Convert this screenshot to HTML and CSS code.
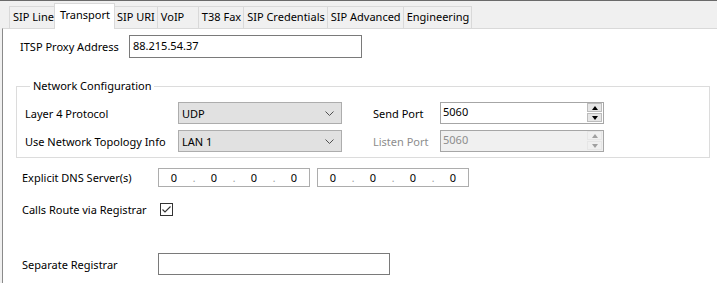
FILE: index.html
```html
<!DOCTYPE html>
<html>
<head>
    <meta charset="utf-8">
    <title>Line - Transport</title>
    <link rel="stylesheet" href="styles.css">
</head>
<body>
    <div class="window">
        <!-- tab strip -->
        <div class="tabs">
            <div class="tab">SIP Line</div>
            <div class="tab active">Transport</div>
            <div class="tab">SIP URI</div>
            <div class="tab">VoIP</div>
            <div class="tab">T38 Fax</div>
            <div class="tab">SIP Credentials</div>
            <div class="tab">SIP Advanced</div>
            <div class="tab">Engineering</div>
        </div>

        <div class="panel">
            <div class="row row-itsp">
                <span class="label label-itsp">ITSP Proxy Address</span>
                <div class="textbox textbox-itsp">88.215.54.37</div>
            </div>

            <fieldset class="group">
                <legend>Network Configuration</legend>
                <div class="group-row">
                    <span class="label label-group">Layer 4 Protocol</span>
                    <div class="combo">
                        <span>UDP</span>
                        <svg class="chevron" width="9" height="5" viewBox="0 0 9 5"><polyline points="0.5,0.5 4.5,4.5 8.5,0.5" fill="none" stroke="#505050" stroke-width="1"/></svg>
                    </div>
                    <span class="label label-port">Send Port</span>
                    <div class="spin">
                        <span class="spin-value">5060</span>
                        <div class="spin-buttons">
                            <div class="spin-btn"><span class="arrow-up"></span></div>
                            <div class="spin-btn"><span class="arrow-down"></span></div>
                        </div>
                    </div>
                </div>
                <div class="group-row">
                    <span class="label label-group">Use Network Topology Info</span>
                    <div class="combo">
                        <span>LAN 1</span>
                        <svg class="chevron" width="9" height="5" viewBox="0 0 9 5"><polyline points="0.5,0.5 4.5,4.5 8.5,0.5" fill="none" stroke="#505050" stroke-width="1"/></svg>
                    </div>
                    <span class="label label-port disabled">Listen Port</span>
                    <div class="spin spin-disabled">
                        <span class="spin-value">5060</span>
                        <div class="spin-buttons">
                            <div class="spin-btn"><span class="arrow-up"></span></div>
                            <div class="spin-btn"><span class="arrow-down"></span></div>
                        </div>
                    </div>
                </div>
            </fieldset>

            <div class="row row-dns">
                <span class="label label-wide">Explicit DNS Server(s)</span>
                <div class="ipbox">
                    <span class="octet">0</span><span class="dot">.</span>
                    <span class="octet">0</span><span class="dot">.</span>
                    <span class="octet">0</span><span class="dot">.</span>
                    <span class="octet">0</span>
                </div>
                <div class="ipbox">
                    <span class="octet">0</span><span class="dot">.</span>
                    <span class="octet">0</span><span class="dot">.</span>
                    <span class="octet">0</span><span class="dot">.</span>
                    <span class="octet">0</span>
                </div>
            </div>

            <div class="row row-check">
                <span class="label label-check">Calls Route via Registrar</span>
                <div class="checkbox">
                    <svg width="11" height="11" viewBox="0 0 11 11"><polyline points="1.5,5.5 4,8 9.5,2.5" fill="none" stroke="#333" stroke-width="1.1"/></svg>
                </div>
            </div>

            <div class="row row-registrar">
                <span class="label label-wide">Separate Registrar</span>
                <div class="textbox textbox-registrar"></div>
            </div>
        </div>
    </div>
</body>
</html>
```

FILE: styles.css
```css
* {
    box-sizing: border-box;
}

html, body {
    margin: 0;
    padding: 0;
}

body {
    width: 717px;
    height: 283px;
    overflow: hidden;
    background: #f0f0f0;
    font-family: 'Noto Sans', 'Open Sans', sans-serif;
    font-size: 11px;
    color: #000;
}

.window {
    height: 283px;
    border-top: 1px solid #6a6a6a;
    display: flex;
    flex-direction: column;
}

/* tab strip */
.tabs {
    display: flex;
    align-items: flex-end;
    height: 27px;
    padding-left: 9px;
}

.tab {
    height: 22px;
    line-height: 20px;
    padding: 0 2px 0 3px;
    min-width: 42px;
    background: #f0f0f0;
    border: 1px solid #d9d9d9;
    border-bottom: none;
    margin-right: -1px;
    white-space: nowrap;
}

.tab.active {
    position: relative;
    z-index: 1;
    height: 26px;
    line-height: 22px;
    padding: 0 4px 0 5px;
    margin: 0 -2px -1px -2px;
    background: #fff;
}

.panel {
    flex: 1;
    margin-left: 2px;
    background: #fff;
    border-top: 1px solid #d9d9d9;
    border-left: 1px solid #8a8a8a;
}

/* rows */
.row {
    display: flex;
    align-items: center;
}

.label {
    white-space: nowrap;
}

.row-itsp {
    margin-top: 6px;
    padding-left: 17px;
}

.label-itsp {
    width: 109px;
}

.textbox {
    height: 23px;
    border: 1px solid #7a7a7a;
    background: #fff;
    padding: 0 3px;
    line-height: 20px;
}

.textbox-itsp {
    width: 233px;
}

/* group box */
.group {
    margin: 20px 7px 0 13px;
    padding: 8px 0 5px 8px;
    border: 1px solid #dcdcdc;
}

.group legend {
    margin-left: 5px;
    padding: 0 3px;
    line-height: 16px;
}

.group-row {
    display: flex;
    align-items: center;
    height: 22px;
}

.group-row + .group-row {
    margin-top: 6px;
}

.label-group {
    width: 153px;
}

.combo {
    width: 164px;
    height: 22px;
    border: 1px solid #adadad;
    background: #e1e1e1;
    display: flex;
    align-items: center;
    justify-content: space-between;
    padding: 0 7px 0 3px;
}

.label-port {
    margin-left: 31px;
    width: 67px;
}

.label.disabled {
    color: #8d8d8d;
}

.spin {
    width: 164px;
    height: 22px;
    border: 1px solid #a6a6a6;
    background: #fff;
    display: flex;
    align-items: flex-start;
    justify-content: space-between;
    padding: 0 1px 0 2px;
    line-height: 18px;
}

.spin-disabled {
    background: #f0f0f0;
    color: #8d8d8d;
}

.spin-buttons {
    display: flex;
    flex-direction: column;
    gap: 1px;
}

.spin-btn {
    width: 15px;
    height: 9px;
    border: 1px solid #bcbcbc;
    background: #e6e6e6;
    display: flex;
    align-items: center;
    justify-content: center;
}

.spin-disabled .spin-btn {
    border-color: #e6e6e6;
    background: #f0f0f0;
}

.arrow-up, .arrow-down {
    width: 0;
    height: 0;
    border-left: 3.5px solid transparent;
    border-right: 3.5px solid transparent;
}

.arrow-up {
    border-bottom: 4px solid #000;
}

.arrow-down {
    border-top: 4px solid #000;
}

.spin-disabled .arrow-up {
    border-bottom-color: #a0a0a0;
}

.spin-disabled .arrow-down {
    border-top-color: #a0a0a0;
}

/* dns */
.row-dns {
    margin-top: 10px;
    padding-left: 19px;
    height: 19px;
}

.label-wide {
    width: 136px;
}

.ipbox {
    width: 152px;
    height: 19px;
    border: 1px solid #adadad;
    display: flex;
    align-items: center;
    padding-left: 1px;
    margin-right: 7px;
}

.octet {
    width: 28px;
    text-align: center;
}

.dot {
    width: 12px;
    text-align: center;
    color: #9a9a9a;
    font-size: 10px;
}

/* checkbox */
.row-check {
    margin-top: 14px;
    padding-left: 19px;
    height: 16px;
}

.label-check {
    width: 138px;
}

.checkbox {
    width: 13px;
    height: 13px;
    border: 1px solid #333;
    display: flex;
    align-items: center;
    justify-content: center;
}

.row-registrar {
    margin-top: 36px;
    padding-left: 19px;
}

.textbox-registrar {
    width: 232px;
    height: 22px;
}
```
